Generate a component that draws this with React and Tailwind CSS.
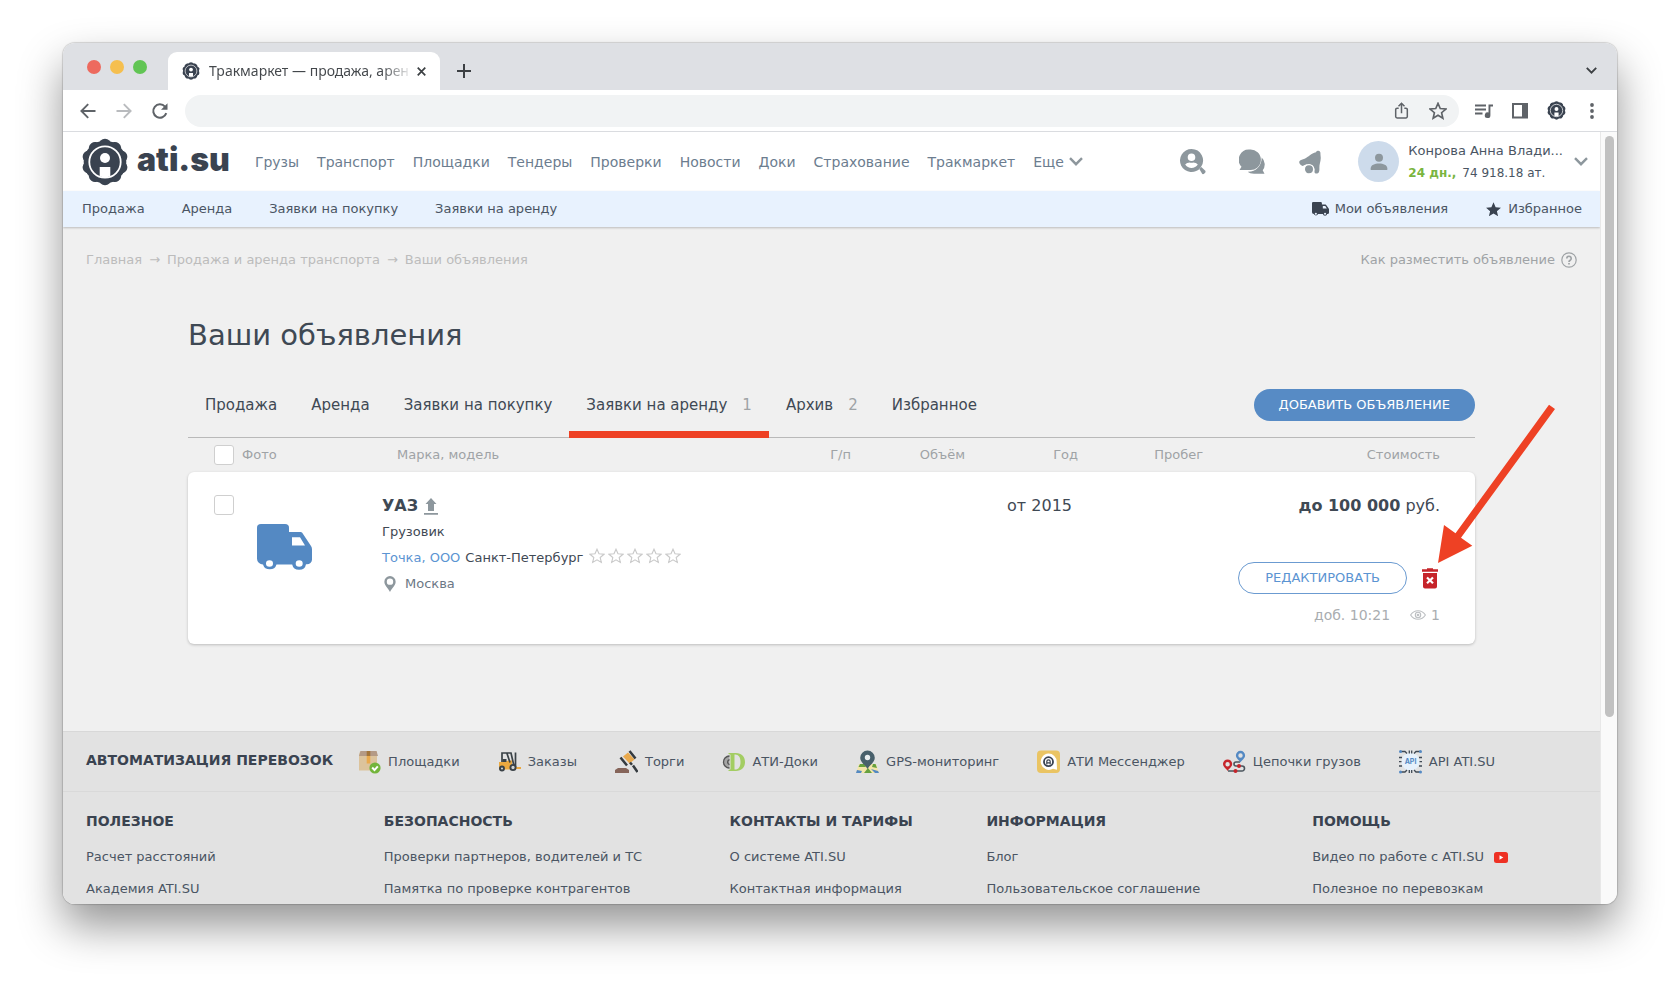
import React from "react";

const NAV = ["Грузы", "Транспорт", "Площадки", "Тендеры", "Проверки", "Новости", "Доки", "Страхование", "Тракмаркет"];
const SUBNAV = ["Продажа", "Аренда", "Заявки на покупку", "Заявки на аренду"];
const TABS = [
  { label: "Продажа" },
  { label: "Аренда" },
  { label: "Заявки на покупку" },
  { label: "Заявки на аренду", count: 1, active: true },
  { label: "Архив", count: 2 },
  { label: "Избранное" },
];
const COLUMNS = [
  { title: "ПОЛЕЗНОЕ", links: ["Расчет расстояний", "Академия ATI.SU"] },
  { title: "БЕЗОПАСНОСТЬ", links: ["Проверки партнеров, водителей и ТС", "Памятка по проверке контрагентов"] },
  { title: "КОНТАКТЫ И ТАРИФЫ", links: ["О системе ATI.SU", "Контактная информация"] },
  { title: "ИНФОРМАЦИЯ", links: ["Блог", "Пользовательское соглашение"] },
  { title: "ПОМОЩЬ", links: ["Видео по работе с ATI.SU", "Полезное по перевозкам"], video: true },
];
const ROW = "grid grid-cols-[194px_1fr_100px_114px_113px_125px_272px]";
const ANGLES = [0, 36, 72, 108, 144, 180, 216, 252, 288, 324];
const STAR = "M12 1.8l3 6.9 7.5.7-5.7 4.9 1.7 7.3L12 17.7l-6.5 3.9 1.7-7.3L1.500 9.400l7.500-.7z";

function Badge({ className }) {
  return (
    <svg viewBox="0 0 48 48" className={className} aria-hidden="true">
      <g fill="#3a4350">
        <circle cx="24" cy="24" r="21.300" />
        {ANGLES.map((a) => (
          <circle key={a} cx="24" cy="7" r="6.200" transform={`rotate(${a} 24 24)`} />
        ))}
      </g>
      <circle cx="24" cy="24" r="15.700" fill="none" stroke="#fff" strokeWidth="1.800" />
      <circle cx="24" cy="20" r="5" fill="#fff" />
      <path d="M18.700 29h10.600v9.200a15.500 15.500 0 0 1-10.600 0z" fill="#fff" />
    </svg>
  );
}

function Chevron({ className }) {
  return (
    <svg viewBox="0 0 14 9" className={className} fill="none" stroke="currentColor" strokeWidth="2.400" aria-hidden="true">
      <path d="M1 1.200l6 6 6-6" />
    </svg>
  );
}

function Truck({ className }) {
  return (
    <svg viewBox="0 0 55 50" preserveAspectRatio="none" className={className} fill="currentColor" aria-hidden="true">
      <path fillRule="evenodd" d="M4 0h24a4 4 0 0 1 4 4v4.500h11.500a2 2 0 0 1 1.700.9L54 23.500a6 6 0 0 1 1 3.300V38a5 5 0 0 1-5 4.800h-1a7 7 0 0 1-13.800.2H19.500A7 7 0 0 1 6 43a6 6 0 0 1-6-6V4a4 4 0 0 1 4-4zM35 14v9h13l-5-9zM12.500 38.500a3.500 3.500 0 1 0 0 7 3.500 3.500 0 0 0 0-7zm29.700 0a3.500 3.500 0 1 0 0 7 3.500 3.500 0 0 0 0-7z" />
    </svg>
  );
}

function BrowserTop() {
  return (
    <div className="shrink-0">
      <div className="flex h-[47px] items-end bg-[#dee0e4] pr-[20px]">
        <div className="flex h-[47px] w-[105px] items-center gap-[9px] pl-6">
          <span className="size-[14px] rounded-full bg-[#ed6a5e]" />
          <span className="size-[14px] rounded-full bg-[#f5bf4f]" />
          <span className="size-[14px] rounded-full bg-[#61c554]" />
        </div>
        <div className="flex h-[38px] w-[272px] items-center rounded-t-[9px] bg-white pr-[10px] pl-[14px]">
          <Badge className="size-[18px] shrink-0" />
          <span className="ml-[9px] flex-1 bg-linear-to-r from-[#43474b] from-85% to-transparent bg-clip-text font-['Noto_Sans'] text-sm whitespace-nowrap text-transparent">
            Тракмаркет — продажа, арен
          </span>
          <button aria-label="Закрыть вкладку" className="p-1">
            <svg viewBox="0 0 10 10" className="size-[9px]" stroke="#3c4043" strokeWidth="1.900"><path d="M.8.8l8.400 8.400M9.200.8L.8 9.200" /></svg>
          </button>
        </div>
        <button aria-label="Новая вкладка" className="ml-[17px] flex h-[38px] items-center">
          <svg viewBox="0 0 14 14" className="size-[14px]" stroke="#3c4043" strokeWidth="2"><path d="M7 0v14M0 7h14" /></svg>
        </button>
        <button aria-label="Поиск вкладок" className="ml-auto flex h-[38px] items-center text-[#3c4043]">
          <Chevron className="w-[11px]" />
        </button>
      </div>
      <div className="flex h-[42px] items-center border-b border-[#dadce0] bg-white pr-[19px] pl-[16px]">
        <div className="flex items-center gap-[18px]">
          <button aria-label="Назад"><svg viewBox="0 0 18 18" className="size-[18px]" fill="none" stroke="#5f6368" strokeWidth="1.900"><path d="M16.500 9H3M9.200 2.200L2.400 9l6.800 6.800" /></svg></button>
          <button aria-label="Вперёд"><svg viewBox="0 0 18 18" className="size-[18px]" fill="none" stroke="#b9bbbe" strokeWidth="1.900"><path d="M1.500 9H15M8.800 2.200L15.600 9l-6.800 6.800" /></svg></button>
          <button aria-label="Обновить"><svg viewBox="0 0 18 18" className="size-[18px]" fill="none"><path d="M15.300 11.200A6.700 6.700 0 1 1 14 4.600" stroke="#5f6368" strokeWidth="2" /><path d="M16.500 1.300v6.500H10z" fill="#5f6368" /></svg></button>
        </div>
        <div className="ml-[16px] flex h-8 flex-1 items-center gap-5 rounded-full bg-[#f1f3f4] pr-[12px] pl-4">
          <input aria-label="Адресная строка" className="min-w-0 flex-1 bg-transparent text-sm outline-none" />
          <button aria-label="Поделиться"><svg viewBox="0 0 16 18" className="h-[17px] w-[15px]" fill="none" stroke="#5f6368" strokeWidth="1.600"><path d="M5 6.500H3.300A1.500 1.500 0 0 0 1.800 8v7.500A1.500 1.500 0 0 0 3.300 17h9.400a1.500 1.500 0 0 0 1.500-1.500V8a1.500 1.500 0 0 0-1.500-1.500H11M8 12V1.500M4.800 4.500L8 1.300l3.200 3.200" /></svg></button>
          <button aria-label="В закладки"><svg viewBox="0 0 24 24" className="size-[18px]" fill="none" stroke="#5f6368" strokeWidth="2.200"><path d={STAR} /></svg></button>
        </div>
        <div className="ml-4 flex items-center gap-[18px]">
          <button aria-label="Медиа">
            <svg viewBox="0 0 18 16" className="h-4 w-[18px]" fill="#5f6368"><path d="M0 1.500h11v2H0zM0 5.500h11v2H0zM0 9.500h7.500v2H0zM13.500 1.500H18v2h-2.600v8.700a2.800 2.800 0 1 1-1.900-2.600z" /></svg>
          </button>
          <button aria-label="Боковая панель">
            <svg viewBox="0 0 18 18" className="size-[18px]"><path d="M2 2h14v13.500H2z" fill="none" stroke="#5f6368" strokeWidth="2" /><path d="M11 2h5v13.500h-5z" fill="#5f6368" /></svg>
          </button>
          <button aria-label="Профиль"><Badge className="size-[19px]" /></button>
          <button aria-label="Меню" className="flex w-[14px] justify-end pr-1"><svg viewBox="0 0 4 16" className="h-4 w-1" fill="#5f6368"><circle cx="2" cy="2" r="1.900" /><circle cx="2" cy="8" r="1.900" /><circle cx="2" cy="14" r="1.900" /></svg></button>
        </div>
      </div>
    </div>
  );
}

function Header() {
  return (
    <header className="flex h-[59px] items-center bg-white pr-[12px] pl-[18px]">
      <a href="#" aria-label="ati.su" className="flex items-center gap-[8px] text-[#3a4350]">
        <Badge className="size-[48px]" />
        <span className="pb-[4px] font-['Inter'] text-[32px] leading-[40px] font-black">ati.su</span>
      </a>
      <nav className="ml-[25px] flex items-center gap-[18px] text-sm text-[#6c7d8f]">
        {NAV.map((n) => <a key={n} href="#">{n}</a>)}
        <button className="flex items-center gap-[5px]">Еще <Chevron className="w-[14px] text-[#8d969c]" /></button>
      </nav>
      <div className="ml-auto flex items-center text-[#8d979d]">
        <button aria-label="Поиск фирм" className="mr-[33px]">
          <svg viewBox="0 0 26 26" className="size-[26px]" fill="currentColor"><path fillRule="evenodd" d="M11.500 0a11.500 11.500 0 0 1 9.200 18.400A11.500 11.500 0 1 1 11.500 0zm0 4.500a3.800 3.800 0 1 0 0 7.600 3.800 3.800 0 0 0 0-7.600zM5.200 15.500c1.400 2.300 3.700 3.500 6.300 3.500s4.900-1.200 6.300-3.500c-.8-1.500-3.200-2-4.300-2.100-1.200.5-2.800.5-4 0-1.100.1-3.500.6-4.300 2.100z" /><path d="M19.300 20l2-2 4 3.800c1 1-1.600 4-3 3.200z" /></svg>
        </button>
        <button aria-label="Сообщения" className="mr-[33px]">
          <svg viewBox="0 0 26 26" className="size-[26px]" fill="currentColor"><path d="M10.700.5a10.300 10.300 0 1 1-.2 20.500H.5l2-3.200A10.300 10.300 0 0 1 10.700.5z" /><path d="M22.700 8.500a9.500 9.500 0 0 1 1 12.800l1.800 3.400H15c-2.700 0-5-.8-6.300-2 8 .3 14-5.500 14-14.200z" /></svg>
        </button>
        <button aria-label="Уведомления" className="mr-[36px]">
          <svg viewBox="0 0 22 24" className="h-[24px] w-[24px]" fill="currentColor"><path d="M17 2.200a2.300 2.300 0 0 1 4.400.4l.1 2.400c.9 4-.6 7.500-1 10.600-.3 2.600.3 4.900-.6 6.700-.8 1.400-3 1.700-4 .8-1-.9.400-3-1-5.600-1.800-3.600-7.400-4.400-11-1.500-2.200-.5-4.600-2.900-3.300-5 1-1.200 3-1.200 5-2.200 4-2 6.400-5.600 11.400-6.600z" /><circle cx="10" cy="19.300" r="4.700" stroke="#fff" strokeWidth="1.400" /></svg>
        </button>
        <a href="#" aria-label="Профиль" className="flex size-[41px] items-center justify-center rounded-full bg-[#cddbeb]">
          <svg viewBox="0 0 18 18" className="size-[18px]" fill="currentColor"><circle cx="9" cy="4.700" r="4" /><path d="M.7 17v-1.700c0-3.300 4-4.800 8.300-4.800s8.300 1.500 8.300 4.800V17z" /></svg>
        </a>
        <div className="ml-[9px] text-[13px] text-[#4a5563]">
          <div className="leading-[22px]">Конрова Анна Влади...</div>
          <div className="flex gap-[6px] text-xs leading-[22px]"><b className="text-[#7ab53f]">24 дн.,</b>74 918.18 ат.</div>
        </div>
        <button aria-label="Меню профиля" className="ml-[11px]"><Chevron className="w-[14px]" /></button>
      </div>
    </header>
  );
}

function Listing() {
  const check = "size-5 shrink-0 appearance-none rounded-[3px] border border-[#cfcfcf] bg-white";
  const th = "text-right font-normal";
  return (
    <table className="block text-[13px]">
      <thead className="block">
        <tr className={`${ROW} h-[34px] items-center text-[#9fa3a6]`}>
          <th className="flex items-center gap-2 pl-[26px] font-normal">
            <input type="checkbox" aria-label="Выбрать все" className={check} />
            <span>Фото</span>
          </th>
          <th className="pl-[15px] text-left font-normal">Марка, модель</th>
          <th className={th}>Г/п</th>
          <th className={th}>Объём</th>
          <th className={th}>Год</th>
          <th className={th}>Пробег</th>
          <th className="pr-[35px] text-right font-normal">Стоимость</th>
        </tr>
      </thead>
      <tbody className="block">
        <tr className={`${ROW} rounded-md bg-white pt-[21px] pb-[19px] text-[#3f4954] shadow-[0_1px_3px_rgba(0,0,0,0.22)]`}>
          <td className="flex items-start gap-[23px] pt-[2px] pl-[26px]">
            <input type="checkbox" aria-label="Выбрать УАЗ" className={check} />
            <Truck className="mt-[29px] h-[47px] w-[55px] text-[#5489c3]" />
          </td>
          <td className="flex flex-col">
            <div className="flex h-[26px] items-center gap-[6px] text-base">
              <b>УАЗ</b>
              <svg viewBox="0 0 14 17" className="h-[17px] w-[14px]" fill="#8d979d"><path d="M7 0l5.500 6H10v7H4V6H1.500zM0 15h14v1.800H0z" /></svg>
            </div>
            <div className="flex h-[26px] items-center">Грузовик</div>
            <div className="flex h-[26px] items-center gap-[5px]">
              <a href="#" className="text-[#5b94d2]">Точка, ООО</a>
              <span>Санкт-Петербург</span>
              <span className="ml-px flex gap-[3px] pb-1">
                {[1, 2, 3, 4, 5].map((i) => (
                  <svg key={i} viewBox="0 0 24 24" className="size-4" fill="none" stroke="#c9c9c9" strokeWidth="1.700"><path d={STAR} /></svg>
                ))}
              </span>
            </div>
            <div className="flex h-[26px] items-center gap-[9px] pl-[2px] text-[#6c7885]">
              <svg viewBox="0 0 12 17" className="h-[16px] w-[12px]" fill="#8d979d"><path fillRule="evenodd" d="M6 0a6 6 0 0 1 6 6c0 4.300-4.400 7-6 11C4.400 13 0 10.300 0 6a6 6 0 0 1 6-6zm0 2.600a3.400 3.400 0 1 0 0 6.800 3.400 3.400 0 0 0 0-6.800z" /></svg>
              Москва
            </div>
          </td>
          <td />
          <td />
          <td className="pr-[6px] text-right text-base leading-[26px]">от 2015</td>
          <td />
          <td className="flex flex-col items-end pr-[35px]">
            <div className="text-base leading-[26px]"><b>до 100 000</b> руб.</div>
            <div className="mt-[43px] flex items-center gap-[15px]">
              <button className="h-8 rounded-full border border-[#6b9bd1] px-[26px] text-[#5b94d2]">РЕДАКТИРОВАТЬ</button>
              <button aria-label="Удалить" className="relative mr-[2px]">
                <svg viewBox="0 0 16 21" className="h-[21px] w-4"><path d="M5 .3h6v1h5v2.400H0V1.300h5zM1 5h14v13.500a2 2 0 0 1-2 2H3a2 2 0 0 1-2-2z" fill="#c6242a" /><path d="M5 9.500l6 5.800M11 9.500l-6 5.800" stroke="#fff" strokeWidth="2.200" /></svg>
                <svg viewBox="0 0 120 160" className="pointer-events-none absolute bottom-full left-[14px] mb-[4px] h-[160px] w-[120px]" fill="#ee4124" aria-hidden="true">
                  <path d="M2 159L8 121l11.500 8.300L113 .8l6 4.300-94 128.600 11.300 8z" />
                </svg>
              </button>
            </div>
            <div className="mt-[11px] flex items-center gap-[5px] text-sm leading-[20px] text-[#a9adb0]">
              <span className="mr-[15px]">доб. 10:21</span>
              <svg viewBox="0 0 16 10" className="h-[10px] w-4" fill="none" stroke="#bcbfc2" strokeWidth="1.100"><path d="M.6 5C2.500 2 5 .7 8 .7S13.500 2 15.400 5C13.500 8 11 9.300 8 9.300S2.500 8 .6 5z" /><circle cx="8" cy="5" r="2.700" /><circle cx="8" cy="5" r=".8" /></svg>
              1
            </div>
          </td>
        </tr>
      </tbody>
    </table>
  );
}

const SERVICES = [
  { label: "Площадки", icon: <><path d="M2 1.500h17v19H1V5z" fill="#dcc39c" /><path d="M2.500 1h16l1.500 5H1z" fill="#b49a86" /><path d="M8.700 1h3.600v5H8.700z" fill="#a2743a" /><path d="M8.700 6h3.600v7.500H8.700z" fill="#e9a94d" /><circle cx="17" cy="18" r="5.600" fill="#73b53b" /><path d="M14.200 17.500l2.300 2.600 3.300-3.700" fill="none" stroke="#fff" strokeWidth="2" /></> },
  { label: "Заказы", icon: <><path d="M1 12h6l3-1.500h4v9H1z" fill="#eba940" /><path d="M15 17h8v2h-8z" fill="#eba940" /><path d="M4 12V3h9l3 13M17.500 2.500V17M12 12.500l-3-9" fill="none" stroke="#3a4247" strokeWidth="1.700" /><path d="M4.500 9h4v3h-4z" fill="#3a4247" /><circle cx="4" cy="18.500" r="2" fill="#cfd3d5" stroke="#3a4247" strokeWidth="1.900" /><circle cx="15" cy="17.500" r="2.600" fill="#cfd3d5" stroke="#3a4247" strokeWidth="1.900" /></> },
  { label: "Торги", icon: <><path d="M0 23v-3l3-2h8l3 2v3z" fill="#86655a" /><path d="M8 6.500l5-4 6.500 7-5 4z" fill="#e9a94d" /><path d="M5.500 7.500l6.500 8M14.500 1l6 7.500M15 12.500l2 2.300M18 15.500l4.500 6.500" stroke="#353b40" strokeWidth="2.500" /></> },
  { label: "АТИ-Доки", icon: <><path d="M7.500 5.500v13a6.500 6.500 0 0 1 0-13z" fill="#a5a5a5" /><path d="M7.500 6a5.500 5.500 0 0 0 0 12M7.500 9.500a2.600 2.600 0 0 0 0 5" fill="none" stroke="#555" strokeWidth="1.300" /><path fillRule="evenodd" d="M6.500 3H14c5.500 0 9 3.600 9 9s-3.500 9-9 9H6.500v-1l2-.7V4.700l-2-.7zM12.500 4.500v15c4 .3 6-2.500 6-7.500s-2-7.800-6-7.500z" fill="#a3cd62" /></> },
  { label: "GPS-мониторинг", icon: <><path d="M3 14h17l3 9H0z" fill="#f3e5a9" /><path d="M4 14h4l2 3H2.500zM8 23l4-5 4 5zM17 14h2.500l1.500 4-5-1z" fill="#67a13e" /><path d="M1 20l5 1-1 2H0zM15 19l7 2 1 2h-4z" fill="#5489c3" /><path d="M11.500.500a7.300 7.300 0 0 1 7.300 7.300c0 4.700-5 7-7.300 11.200-2.300-4.200-7.300-6.500-7.300-11.200A7.300 7.300 0 0 1 11.500.500z" fill="#48606b" /><circle cx="11.500" cy="7.500" r="2.700" fill="#e9eef0" /></> },
  { label: "АТИ Мессенджер", icon: <><rect x="0" y="0.500" width="23" height="22.500" rx="4" fill="#eac463" /><path d="M11.500 3.500a8.200 8.200 0 0 1 8.200 8.200l.3 8-4-.9a8.200 8.200 0 1 1-4.500-15.300z" fill="#fff" /><circle cx="11.500" cy="11.700" r="4.500" fill="none" stroke="#3a4350" strokeWidth="1.800" /><path d="M9.800 14.500v-3a1.700 1.700 0 0 1 3.400 0v3M9.800 12.800h3.400" fill="none" stroke="#3a4350" strokeWidth="1.200" /></> },
  { label: "Цепочки грузов", icon: <><path d="M5 21h14a2.500 2.500 0 0 0 0-5h-6a2 2 0 0 1 0-4h4" fill="none" stroke="#4b555d" strokeWidth="1.600" /><path fillRule="evenodd" d="M17.500.8a4.600 4.600 0 0 1 4.600 4.600c0 3-3.300 4.500-4.600 7-1.300-2.500-4.600-4-4.600-7A4.600 4.600 0 0 1 17.500.8zm0 2.500a2.200 2.200 0 1 0 0 4.400 2.200 2.200 0 0 0 0-4.400z" fill="#5489c3" /><path fillRule="evenodd" d="M4.600 9.500a4.600 4.600 0 0 1 4.600 4.600c0 3-3.300 4.500-4.600 7-1.300-2.500-4.600-4-4.600-7a4.600 4.600 0 0 1 4.600-4.600zm0 2.500a2.200 2.200 0 1 0 0 4.400 2.200 2.200 0 0 0 0-4.400z" fill="#c6242a" /><circle cx="12.500" cy="21" r="2" fill="#c6242a" /><circle cx="16" cy="16" r="2" fill="#c6242a" /></> },
  { label: "API ATI.SU", icon: <><circle cx="11.500" cy="11.700" r="9" fill="#e6f1fc" /><path d="M2 1.500h4l2 2M21 1.500h-4l-2 2M2 22h4l2-2M21 22h-4l-2-2M10.300.5v3M12.700.5v3M10.300 20v3M12.700 20v3M0 7.500h3M0 11.700h2.500M0 16h3M20 7.500h3M20.500 11.700H23M20 16h3" fill="none" stroke="#3f4954" strokeWidth="1.300" /><g fill="#5489c3"><circle cx="1.500" cy="1.500" r="1.500" /><circle cx="21.500" cy="1.500" r="1.500" /><circle cx="1.500" cy="22" r="1.500" /><circle cx="21.500" cy="22" r="1.500" /></g><text x="11.500" y="14.300" textAnchor="middle" fontSize="7" fontWeight="700" fontFamily="Inter, sans-serif" fill="#5489c3">API</text></> },
];

function Footer() {
  return (
    <footer className="border-t border-[#d8d8d8] bg-[#e2e2e2] text-[#4a5563]">
      <div className="flex h-[60px] items-center border-b border-[#d9d9d9] px-[23px] text-[13px]">
        <h2 className="mr-[25px] pb-[4px] text-sm font-bold text-[#3a4350]">АВТОМАТИЗАЦИЯ ПЕРЕВОЗОК</h2>
        <ul className="flex gap-[38px]">
          {SERVICES.map((s) => (
            <li key={s.label}>
              <a href="#" className="flex items-center gap-[7px] whitespace-nowrap">
                <svg viewBox="0 0 23 24" className="h-[24px] w-[23px]" aria-hidden="true">{s.icon}</svg>
                {s.label}
              </a>
            </li>
          ))}
        </ul>
      </div>
      <div className="grid grid-cols-[298fr_346fr_257fr_326fr_265fr] px-[23px] pt-[17px] pb-8 text-[13px]">
        {COLUMNS.map((c) => (
          <section key={c.title}>
            <h3 className="text-sm leading-[24px] font-bold text-[#3a4350]">{c.title}</h3>
            <ul className="mt-[8px]">
              {c.links.map((l, i) => (
                <li key={l} className="flex h-8 items-center gap-[10px] whitespace-nowrap">
                  <a href="#">{l}</a>
                  {c.video && i === 0 && (
                    <svg viewBox="0 0 14 11" className="h-[11px] w-[14px]"><rect width="14" height="11" rx="2.500" fill="#ee3124" /><path d="M5.500 3.300v4.400l3.800-2.200z" fill="#fff" /></svg>
                  )}
                </li>
              ))}
            </ul>
          </section>
        ))}
      </div>
    </footer>
  );
}

export default function App() {
  return (
    <div className="flex h-screen flex-col overflow-hidden bg-white px-[63px] pt-[43px] pb-[84px] font-['DejaVu_Sans',sans-serif]">
      <div className="flex min-h-0 flex-1 flex-col overflow-hidden rounded-xl shadow-[0_0_1px_1px_rgba(0,0,0,0.15),0_22px_44px_rgba(0,0,0,0.42)]">
        <BrowserTop />
        <div className="flex min-h-0 flex-1">
          <div className="min-w-0 flex-1 overflow-hidden bg-[#f0f0f0]">
            <Header />
            <div className="flex h-[36px] items-center justify-between bg-[#e8f2fe] pr-[18px] pl-[19px] text-[13px] text-[#4a5563] shadow-[0_1px_2px_rgba(0,0,0,0.22)]">
              <nav className="flex gap-[37px]">{SUBNAV.map((n) => <a key={n} href="#">{n}</a>)}</nav>
              <div className="flex gap-[37px]">
                <a href="#" className="flex items-center gap-[6px]"><Truck className="h-[14px] w-[17px] text-[#3a4350]" />Мои объявления</a>
                <a href="#" className="flex items-center gap-[6px]"><svg viewBox="0 0 24 24" className="size-[17px]" fill="#3a4350"><path d={STAR} /></svg>Избранное</a>
              </div>
            </div>
            <div className="flex items-center justify-between px-[23px] pt-[23px] text-[13px] leading-[20px]">
              <nav className="flex gap-[7px] text-[#bcbcbc]">
                <a href="#">Главная</a><span>→</span><a href="#">Продажа и аренда транспорта</a><span>→</span><span>Ваши объявления</span>
              </nav>
              <a href="#" className="flex items-center gap-[6px] text-[#9fa3a6]">
                Как разместить объявление
                <svg viewBox="0 0 16 16" className="size-4" fill="none" stroke="currentColor" strokeWidth="1.200"><circle cx="8" cy="8" r="7.200" /><path d="M5.800 6.500a2.200 2.200 0 1 1 3.400 1.800c-.8.5-1.200.8-1.200 1.700M8 11v1.500" strokeWidth="1.700" /></svg>
              </a>
            </div>
            <main className="mx-[125px]">
              <h1 className="mt-[45px] text-[29px] leading-[40px] text-[#3f4954]">Ваши объявления</h1>
              <div className="mt-[23px] flex h-[60px] items-stretch border-b border-[#b9b9b9]">
                {TABS.map((t) => (
                  <a key={t.label} href="#" className={`-mb-px flex border-b-[7px] px-[17px] pt-[15px] text-[15px] leading-[24px] text-[#3f4954] ${t.active ? "border-[#ee4124]" : "border-transparent"}`}>
                    {t.label}
                    {t.count && <span className="ml-[15px] text-[#9fa3a6]">{t.count}</span>}
                  </a>
                ))}
                <button className="mt-[11px] ml-auto h-8 rounded-full bg-[#578bc5] px-[25px] text-[13px] text-white">ДОБАВИТЬ ОБЪЯВЛЕНИЕ</button>
              </div>
              <Listing />
            </main>
            <div className="h-[87px]" />
            <Footer />
          </div>
          <div className="flex w-[17px] shrink-0 justify-center border-l border-[#e8e8e8] bg-[#fafafa] py-1">
            <div className="h-[76%] w-[9px] rounded-full bg-[#c1c1c1]" />
          </div>
        </div>
      </div>
    </div>
  );
}
